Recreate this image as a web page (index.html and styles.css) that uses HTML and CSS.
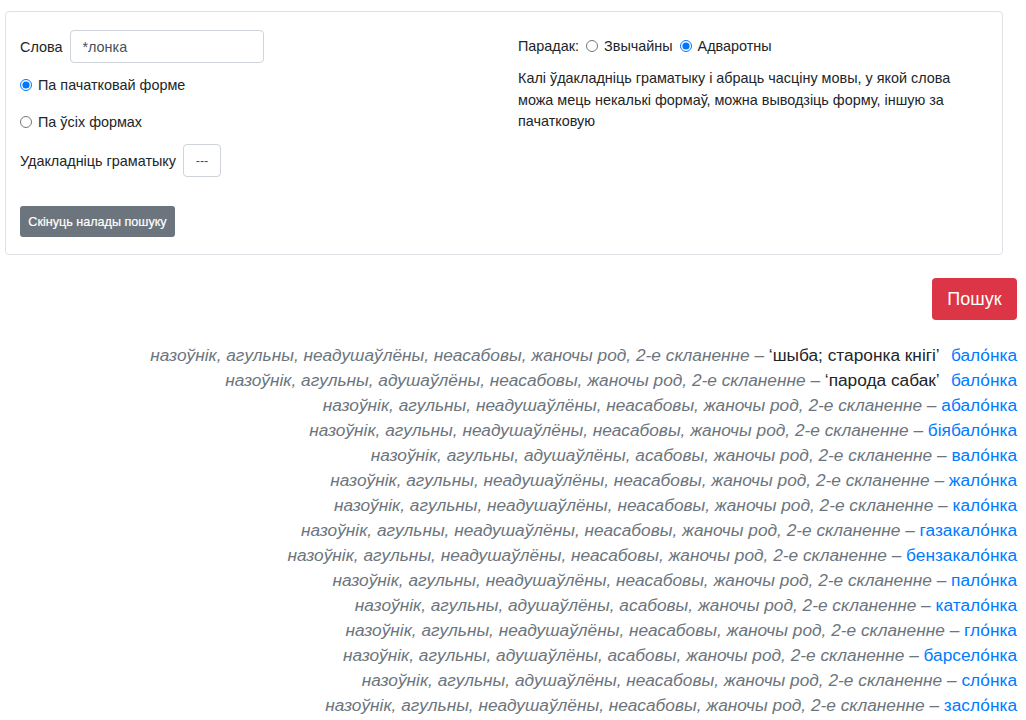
FILE: index.html
```html
<!DOCTYPE html>
<html lang="be">
<head>
<meta charset="utf-8">
<title>Пошук</title>
<link rel="stylesheet" href="styles.css">
</head>
<body>
<div class="page">
  <form class="card">
    <div class="col-left">
      <div class="word-row">
        <label class="lbl">Слова</label>
        <input class="word-input" type="text" value="*лонка">
      </div>
      <label class="radio-row first"><input type="radio" name="mode" checked> Па пачатковай форме</label>
      <label class="radio-row second"><input type="radio" name="mode"> Па ўсіх формах</label>
      <div class="gram-row">
        <span class="lbl">Удакладніць граматыку</span>
        <span class="gram-box">---</span>
      </div>
      <button type="button" class="btn-reset">Скінуць налады пошуку</button>
    </div>
    <div class="col-right">
      <div class="order-row">
        <span>Парадак:</span>
        <label class="inline-radio"><input type="radio" name="order"> Звычайны</label>
        <label class="inline-radio"><input type="radio" name="order" checked> Адваротны</label>
      </div>
      <p class="hint">Калі ўдакладніць граматыку і абраць часціну мовы, у якой слова можа мець некалькі формаў, можна выводзіць форму, іншую за пачатковую</p>
    </div>
  </form>
  <div class="search-bar">
    <button type="button" class="btn-search">Пошук</button>
  </div>
  <div class="results">
    <div class="row"><i>назоўнік, агульны, неадушаўлёны, неасабовы, жаночы род, 2-е скланенне – </i><span class="desc">‘шыба; старонка кнігі’</span> <a class="word gap" href="#">бало́нка</a></div>
    <div class="row"><i>назоўнік, агульны, адушаўлёны, неасабовы, жаночы род, 2-е скланенне – </i><span class="desc">‘парода сабак’</span> <a class="word gap" href="#">бало́нка</a></div>
    <div class="row"><i>назоўнік, агульны, неадушаўлёны, неасабовы, жаночы род, 2-е скланенне – </i><a class="word" href="#">абало́нка</a></div>
    <div class="row"><i>назоўнік, агульны, неадушаўлёны, неасабовы, жаночы род, 2-е скланенне – </i><a class="word" href="#">біябало́нка</a></div>
    <div class="row"><i>назоўнік, агульны, адушаўлёны, асабовы, жаночы род, 2-е скланенне – </i><a class="word" href="#">вало́нка</a></div>
    <div class="row"><i>назоўнік, агульны, неадушаўлёны, неасабовы, жаночы род, 2-е скланенне – </i><a class="word" href="#">жало́нка</a></div>
    <div class="row"><i>назоўнік, агульны, неадушаўлёны, неасабовы, жаночы род, 2-е скланенне – </i><a class="word" href="#">кало́нка</a></div>
    <div class="row"><i>назоўнік, агульны, неадушаўлёны, неасабовы, жаночы род, 2-е скланенне – </i><a class="word" href="#">газакало́нка</a></div>
    <div class="row"><i>назоўнік, агульны, неадушаўлёны, неасабовы, жаночы род, 2-е скланенне – </i><a class="word" href="#">бензакало́нка</a></div>
    <div class="row"><i>назоўнік, агульны, неадушаўлёны, неасабовы, жаночы род, 2-е скланенне – </i><a class="word" href="#">пало́нка</a></div>
    <div class="row"><i>назоўнік, агульны, адушаўлёны, асабовы, жаночы род, 2-е скланенне – </i><a class="word" href="#">катало́нка</a></div>
    <div class="row"><i>назоўнік, агульны, неадушаўлёны, неасабовы, жаночы род, 2-е скланенне – </i><a class="word" href="#">гло́нка</a></div>
    <div class="row"><i>назоўнік, агульны, адушаўлёны, асабовы, жаночы род, 2-е скланенне – </i><a class="word" href="#">барсело́нка</a></div>
    <div class="row"><i>назоўнік, агульны, адушаўлёны, неасабовы, жаночы род, 2-е скланенне – </i><a class="word" href="#">сло́нка</a></div>
    <div class="row"><i>назоўнік, агульны, неадушаўлёны, неасабовы, жаночы род, 2-е скланенне – </i><a class="word" href="#">засло́нка</a></div>
  </div>
</div>
</body>
</html>
```

FILE: styles.css
```css
* { box-sizing: border-box; }

body {
  margin: 0;
  font-family: "Liberation Sans", Arial, sans-serif;
  color: #212529;
  background: #fff;
}

.page {
  padding: 11px 9px 0 5px;
}

.card {
  width: 998px;
  border: 1px solid #dee2e6;
  border-radius: 4px;
  padding: 18px 14px 17px;
  display: grid;
  grid-template-columns: 498px 1fr;
  font-size: 14.4px;
  margin: 0;
}

.col-left {
  display: flex;
  flex-direction: column;
  align-items: flex-start;
}

.word-row {
  display: flex;
  align-items: center;
  gap: 8px;
}

.word-input {
  width: 194px;
  height: 33px;
  border: 1px solid #ced4da;
  border-radius: 4px;
  padding: 0 11px;
  font-family: inherit;
  font-size: 14.4px;
  color: #495057;
}

.radio-row {
  display: flex;
  align-items: center;
  height: 20px;
  gap: 6px;
}

.radio-row input,
.inline-radio input {
  margin: 0;
  width: 12px;
  height: 12px;
}

.radio-row.first { margin-top: 12px; }
.radio-row.second { margin-top: 17px; }

.gram-row {
  display: flex;
  align-items: center;
  gap: 7px;
  margin-top: 12px;
}

.gram-box {
  display: inline-flex;
  align-items: center;
  justify-content: center;
  width: 38px;
  height: 33px;
  border: 1px solid #ced4da;
  border-radius: 4px;
  font-size: 12.5px;
  color: #495057;
}

.btn-reset {
  margin-top: 29px;
  width: 155px;
  height: 31px;
  background: #6c757d;
  color: #fff;
  border: none;
  border-radius: 3px;
  font-family: inherit;
  font-size: 12.6px;
  padding: 0;
  -webkit-text-stroke: 0.2px #fff;
}

.col-right {
  padding-top: 6px;
}

.order-row {
  display: flex;
  align-items: center;
  gap: 6px;
  height: 20px;
}

.inline-radio {
  display: inline-flex;
  align-items: center;
  gap: 6px;
  margin-left: 1px;
}

.hint {
  margin: 12px 0 0;
  line-height: 21.5px;
  max-width: 450px;
}

.search-bar {
  display: flex;
  justify-content: flex-end;
  margin-top: 23px;
}

.btn-search {
  width: 85px;
  height: 42px;
  background: #dc3545;
  color: #fff;
  border: none;
  border-radius: 4px;
  font-family: inherit;
  font-size: 18px;
  padding: 0;
}

.results {
  margin-top: 23px;
  text-align: right;
  font-size: 17.3px;
  line-height: 25px;
}

.row {
  white-space: nowrap;
}

.row i {
  color: #6c757d;
}

.desc {
  color: #212529;
}

.word {
  color: #007bff;
  text-decoration: none;
}

.word.gap {
  margin-left: 7px;
}
```
